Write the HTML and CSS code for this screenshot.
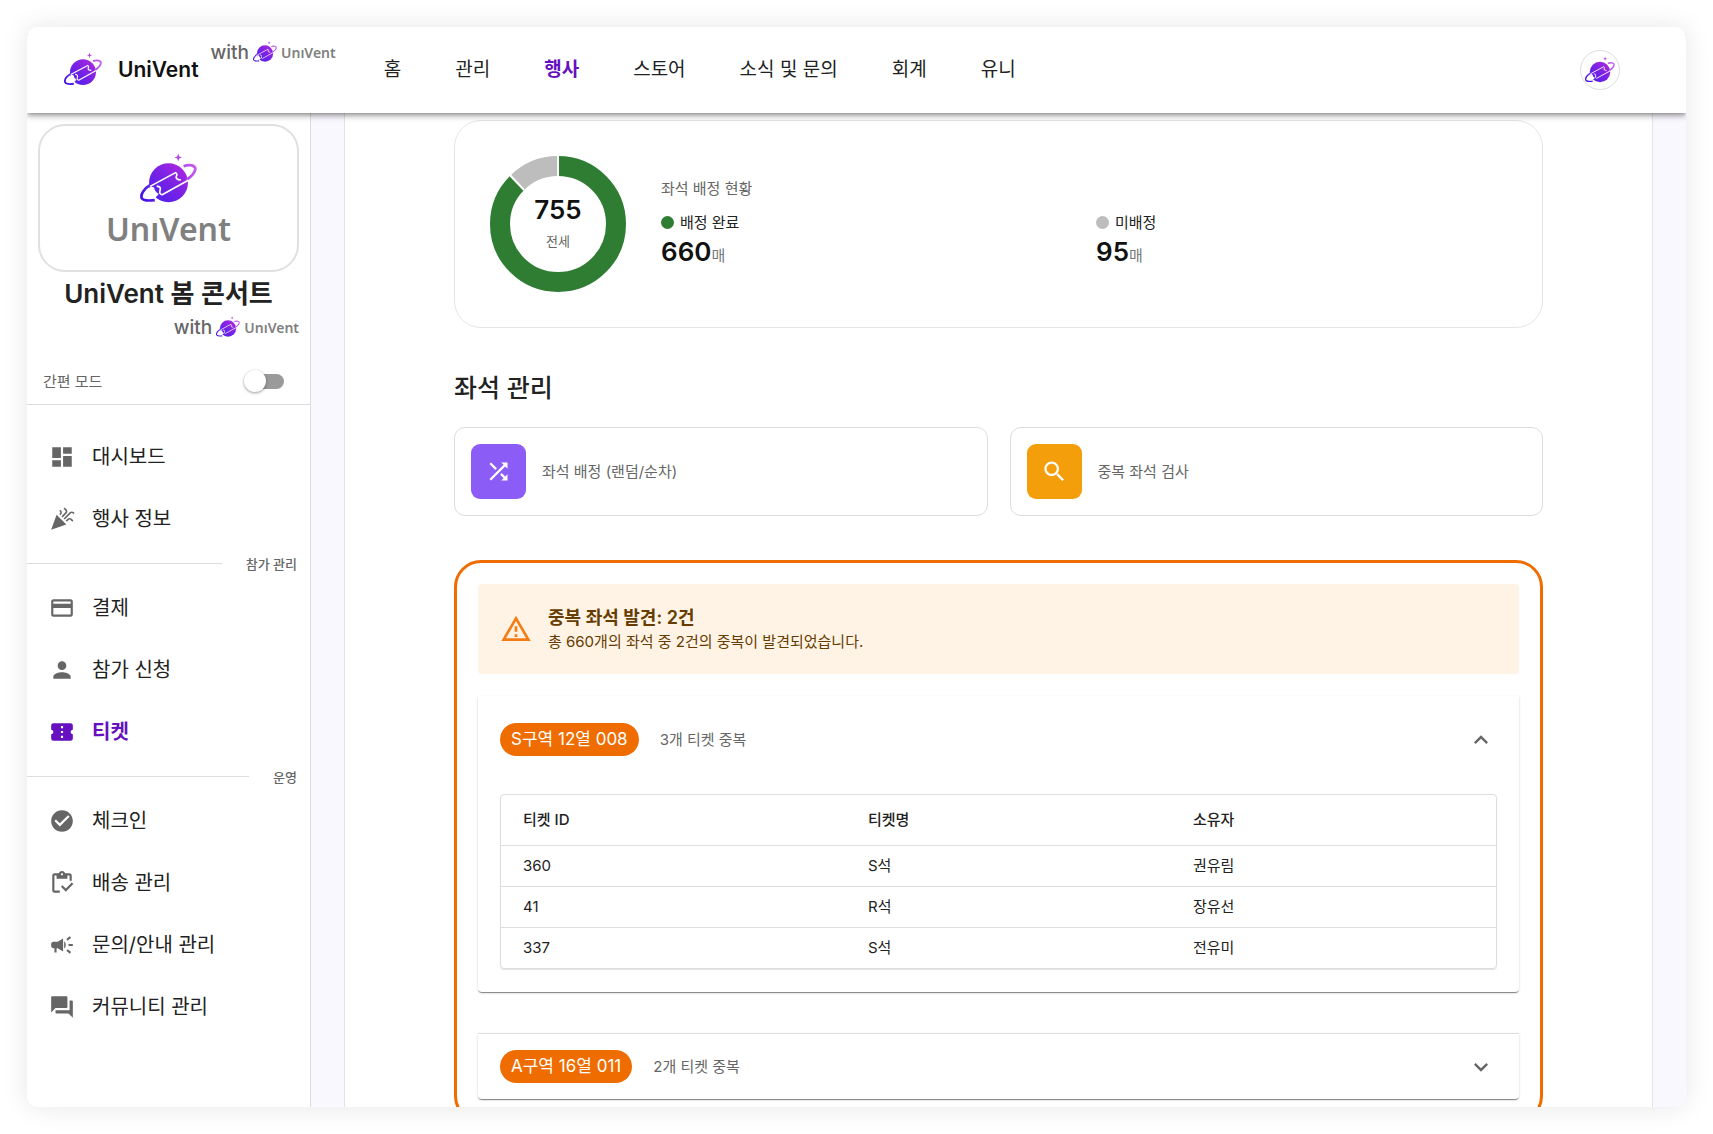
FILE: index.html
```
<!DOCTYPE html>
<html lang="ko">
<head>
  <meta charset="UTF-8">
  <meta name="viewport" content="width=device-width, initial-scale=1.0">
  <title>UniVent 봄 콘서트 - 티켓</title>
  <link rel="stylesheet" href="styles.css">
</head>
<body>

  <!-- shared logo -->
  <svg class="defs" width="0" height="0" aria-hidden="true">
    <defs>
      <linearGradient id="planetFill" gradientUnits="userSpaceOnUse" x1="60" y1="170" x2="170" y2="50">
        <stop offset="0" stop-color="#4a1ff0"></stop>
        <stop offset="0.5" stop-color="#7a22e4"></stop>
        <stop offset="1" stop-color="#b92ae0"></stop>
      </linearGradient>
      <linearGradient id="ringFill" gradientUnits="userSpaceOnUse" x1="40" y1="160" x2="195" y2="60">
        <stop offset="0" stop-color="#4512e8"></stop>
        <stop offset="1" stop-color="#c95cf0"></stop>
      </linearGradient>
      <symbol id="planet" viewBox="30 25 170 150">
        <circle cx="115" cy="114" r="58" fill="url(#planetFill)"></circle>
        <path d="M60 124L60 146Q62 154 76 158L86 148Q74 140 72 128Z" fill="#fff"></path>
        <path d="M62 120C42 132 31 148 35 160Q40 170 74 166" fill="none" stroke="url(#ringFill)" stroke-width="8"></path>
        <path d="M160 65C178 58 196 62 195 74C193 88 180 98 168 106" fill="none" stroke="url(#ringFill)" stroke-width="8"></path>
        <path d="M60 125L136 84Q143 88 138 96Q136 105 152 106M80 124Q94 126 90 136Q86 148 96 150L174 107" fill="none" stroke="#fff" stroke-width="5" stroke-linejoin="round"></path>
        <path d="M144 27L147 36L155 39L147 42L144 51L141 42L133 39L141 36Z" fill="#b345e6"></path>
      </symbol>
    </defs>
  </svg>

  <div class="app">
    <header class="topbar">
      <a class="brand" href="#">
        <svg class="brand-logo"><use href="#planet"></use></svg>
        <span class="brand-name">UniVent</span>
      </a>
      <div class="with with-top">
        <span>with</span>
        <svg class="with-logo"><use href="#planet"></use></svg>
        <span class="wordmark">UnıVent</span>
      </div>
      <nav class="topnav">
        <a href="#">홈</a>
        <a href="#">관리</a>
        <a href="#" class="active">행사</a>
        <a href="#">스토어</a>
        <a href="#">소식 및 문의</a>
        <a href="#">회계</a>
        <a href="#">유니</a>
      </nav>
      <button class="avatar" type="button" aria-label="프로필">
        <svg><use href="#planet"></use></svg>
      </button>
    </header>

    <div class="layout">
      <aside class="sidebar">
        <div class="event-logo">
          <svg><use href="#planet"></use></svg>
          <span class="wordmark">UnıVent</span>
        </div>
        <h1 class="event-title">UniVent 봄 콘서트</h1>
        <div class="with">
          <span>with</span>
          <svg class="with-logo"><use href="#planet"></use></svg>
          <span class="wordmark">UnıVent</span>
        </div>

        <div class="simple-mode">
          <label for="simpleMode">간편 모드</label>
          <input type="checkbox" id="simpleMode" class="switch">
        </div>

        <nav class="menu">
          <a href="#">
            <svg viewBox="0 0 24 24"><path d="M3 13h8V3H3v10zm0 8h8v-6H3v6zm10 0h8V11h-8v10zm0-18v6h8V3h-8z"/></svg>
            대시보드
          </a>
          <a href="#">
            <svg viewBox="0 0 24 24"><path d="M2 22l14-5-9-9zM14.53 12.53l5.59-5.59c.49-.49 1.28-.49 1.77 0l.59.59 1.06-1.06-.59-.59c-1.07-1.07-2.82-1.07-3.89 0l-5.59 5.59 1.06 1.06zM10.06 6.88l-.59.59 1.06 1.06.59-.59c1.07-1.07 1.07-2.82 0-3.89l-.59-.59-1.06 1.07.59.59c.48.48.48 1.28 0 1.76zM17.06 11.88l-1.59 1.59 1.06 1.06 1.59-1.59c.49-.49 1.28-.49 1.77 0l1.61 1.61 1.06-1.06-1.61-1.61c-1.08-1.07-2.82-1.07-3.89 0zM15.06 5.88l-3.59 3.59 1.06 1.06 3.59-3.59c1.07-1.07 1.07-2.82 0-3.89l-1.59-1.59-1.06 1.06 1.59 1.59c.48.49.48 1.29 0 1.77z"/></svg>
            행사 정보
          </a>
          <div class="menu-divider">참가 관리</div>
          <a href="#">
            <svg viewBox="0 0 24 24"><path d="M20 4H4c-1.11 0-1.99.89-1.99 2L2 18c0 1.11.89 2 2 2h16c1.11 0 2-.89 2-2V6c0-1.11-.89-2-2-2zm0 14H4v-6h16v6zm0-10H4V6h16v2z"/></svg>
            결제
          </a>
          <a href="#">
            <svg viewBox="0 0 24 24"><path d="M12 12c2.210 0 4-1.790 4-4s-1.790-4-4-4-4 1.790-4 4 1.790 4 4 4zm0 2c-2.670 0-8 1.340-8 4v2h16v-2c0-2.660-5.330-4-8-4z"/></svg>
            참가 신청
          </a>
          <a href="#" class="active">
            <svg viewBox="0 0 24 24"><path d="M22 10V6c0-1.110-.9-2-2-2H4c-1.100 0-1.990.89-1.990 2v4c1.100 0 1.990.9 1.990 2s-.89 2-2 2v4c0 1.100.9 2 2 2h16c1.100 0 2-.9 2-2v-4c-1.100 0-2-.9-2-2s.9-2 2-2zm-9 7.500h-2v-2h2v2zm0-4.500h-2v-2h2v2zm0-4.500h-2v-2h2v2z"/></svg>
            티켓
          </a>
          <div class="menu-divider">운영</div>
          <a href="#">
            <svg viewBox="0 0 24 24"><path d="M12 2C6.480 2 2 6.480 2 12s4.480 10 10 10 10-4.480 10-10S17.520 2 12 2zm-2 15l-5-5 1.410-1.410L10 14.170l7.590-7.590L19 8l-9 9z"/></svg>
            체크인
          </a>
          <a href="#">
            <svg viewBox="0 0 24 24"><path d="M5 5h2v3h10V5h2v5h2V5c0-1.100-.9-2-2-2h-4.180C14.400 1.840 13.300 1 12 1s-2.400.84-2.820 2H5c-1.100 0-2 .9-2 2v14c0 1.100.9 2 2 2h5v-2H5V5zm7-2c.55 0 1 .45 1 1s-.45 1-1 1-1-.45-1-1 .45-1 1-1zM21 11.500L15.510 17l-3.010-3L11 15.500l4.510 4.500L22.500 13z"/></svg>
            배송 관리
          </a>
          <a href="#">
            <svg viewBox="0 0 24 24"><path d="M18 11v2h4v-2h-4zm-2 6.610c.96.71 2.210 1.650 3.200 2.390.4-.53.8-1.070 1.200-1.600-.99-.74-2.240-1.680-3.200-2.400-.4.54-.8 1.080-1.200 1.610zM20.400 5.600c-.4-.53-.8-1.070-1.200-1.600-.99.74-2.240 1.680-3.200 2.400.4.530.8 1.070 1.200 1.600.96-.72 2.210-1.650 3.200-2.400zM4 9c-1.100 0-2 .9-2 2v2c0 1.100.9 2 2 2h1v4h2v-4h1l5 3V6L8 9H4zm11.500 3c0-1.330-.58-2.530-1.500-3.350v6.690c.92-.81 1.500-2.010 1.500-3.340z"/></svg>
            문의/안내 관리
          </a>
          <a href="#">
            <svg viewBox="0 0 24 24"><path d="M21 6h-2v9H6v2c0 .55.45 1 1 1h11l4 4V7c0-.55-.45-1-1-1zm-4 6V3c0-.55-.45-1-1-1H3c-.55 0-1 .45-1 1v14l4-4h10c.55 0 1-.45 1-1z"/></svg>
            커뮤니티 관리
          </a>
        </nav>
      </aside>

      <main class="page">
        <div class="panel">

          <section class="summary">
            <div class="donut">
              <svg viewBox="0 0 136 136">
                <circle class="donut-done" cx="68" cy="68" r="58" pathLength="755" stroke-dasharray="660 95"></circle>
                <circle class="donut-left" cx="68" cy="68" r="58" pathLength="755" stroke-dasharray="95 660" stroke-dashoffset="-660"></circle>
                <path class="donut-gap" d="M68 20V0M34 34L19 18"></path>
              </svg>
              <div class="donut-label">
                <strong>755</strong>
                <span>전세</span>
              </div>
            </div>
            <div class="summary-body">
              <h3>좌석 배정 현황</h3>
              <div class="stats">
                <div class="stat">
                  <div class="stat-name"><i class="dot dot-done"></i>배정 완료</div>
                  <div class="stat-value"><strong>660</strong>매</div>
                </div>
                <div class="stat">
                  <div class="stat-name"><i class="dot"></i>미배정</div>
                  <div class="stat-value"><strong>95</strong>매</div>
                </div>
              </div>
            </div>
          </section>

          <h2 class="section-title">좌석 관리</h2>
          <div class="actions">
            <button type="button" class="action">
              <span class="action-icon purple">
                <svg viewBox="0 0 24 24"><path d="M10.590 9.170L5.410 4 4 5.410l5.170 5.170 1.420-1.410zM14.500 4l2.040 2.040L4 18.590 5.410 20 17.960 7.460 20 9.500V4h-5.500zm.33 9.410l-1.410 1.410 3.130 3.130L14.500 20H20v-5.500l-2.040 2.040-3.130-3.130z"/></svg>
              </span>
              좌석 배정 (랜덤/순차)
            </button>
            <button type="button" class="action">
              <span class="action-icon amber">
                <svg viewBox="0 0 24 24"><path d="M15.500 14h-.79l-.28-.27C15.410 12.590 16 11.110 16 9.500 16 5.910 13.090 3 9.500 3S3 5.910 3 9.500 5.910 16 9.500 16c1.610 0 3.090-.59 4.230-1.570l.27.28v.79l5 4.990L20.490 19l-4.990-5zm-6 0C7.010 14 5 11.990 5 9.500S7.010 5 9.500 5 14 7.010 14 9.500 11.990 14 9.500 14z"/></svg>
              </span>
              중복 좌석 검사
            </button>
          </div>

          <section class="duplicates">
            <div class="alert">
              <svg viewBox="0 0 24 24"><path d="M12 5.990L19.530 19H4.470L12 5.990M12 2L1 21h22L12 2zm1 14h-2v2h2v-2zm0-6h-2v4h2v-4z"/></svg>
              <div>
                <h3>중복 좌석 발견: 2건</h3>
                <p>총 660개의 좌석 중 2건의 중복이 발견되었습니다.</p>
              </div>
            </div>

            <div class="accordion open">
              <button type="button" class="accordion-head" aria-expanded="true">
                <span class="chip">S구역 12열 008</span>
                <span class="count">3개 티켓 중복</span>
                <svg viewBox="0 0 24 24"><path d="M12 8l-6 6 1.410 1.410L12 10.830l4.590 4.580L18 14z"/></svg>
              </button>
              <div class="table-wrap">
                <table>
                  <thead>
                    <tr>
                      <th class="col-id">티켓 ID</th>
                      <th class="col-name">티켓명</th>
                      <th>소유자</th>
                    </tr>
                  </thead>
                  <tbody>
                    <tr><td>360</td><td>S석</td><td>권유림</td></tr>
                    <tr><td>41</td><td>R석</td><td>장유선</td></tr>
                    <tr><td>337</td><td>S석</td><td>전유미</td></tr>
                  </tbody>
                </table>
              </div>
            </div>

            <div class="accordion">
              <button type="button" class="accordion-head" aria-expanded="false">
                <span class="chip">A구역 16열 011</span>
                <span class="count">2개 티켓 중복</span>
                <svg viewBox="0 0 24 24"><path d="M16.590 8.590L12 13.170 7.410 8.590 6 10l6 6 6-6z"/></svg>
              </button>
            </div>
          </section>

        </div>
      </main>
    </div>
  </div>

</body>
</html>
```
FILE: styles.css
```
* {
  box-sizing: border-box;
}

body {
  margin: 0;
  height: 100vh;
  padding: 27px;
  background: #fff;
  color: #222;
  font-family: Inter, "Noto Sans CJK KR", sans-serif;
  font-size: 15px;
  line-height: 22px;
  overflow: hidden;
}

h1, h2, h3, p {
  margin: 0;
}

a {
  color: inherit;
  text-decoration: none;
}

button {
  font: inherit;
  color: inherit;
  text-align: left;
  cursor: pointer;
}

.defs {
  position: absolute;
}

.app {
  display: flex;
  flex-direction: column;
  height: 100%;
  border-radius: 11px;
  background: #fff;
  box-shadow: 0 0 27px rgba(0,0,0,0.1);
  overflow: hidden;
}

/* top bar */
.topbar {
  position: relative;
  z-index: 2;
  display: flex;
  align-items: center;
  flex: none;
  height: 86px;
  padding: 0 66px 0 37px;
  background: #fff;
  box-shadow: 0 2px 4px -1px rgba(0,0,0,0.3), 0 4px 5px rgba(0,0,0,0.16), 0 1px 10px rgba(0,0,0,0.12);
}

.brand {
  display: flex;
  align-items: center;
  gap: 16px;
}

.brand-logo {
  width: 38px;
  height: 36px;
  padding-bottom: 2px;
}

.brand-name {
  font-size: 21px;
  font-weight: 600;
  color: #111;
}

.with {
  display: flex;
  align-items: center;
  justify-content: flex-end;
  gap: 4px;
  font-size: 19px;
  font-weight: 500;
  color: #666;
}

.with-top {
  align-self: flex-start;
  margin: 13px 0 0 12px;
}

.with-logo {
  width: 24px;
  height: 26px;
  padding-bottom: 3px;
}

.wordmark {
  font-family: "Noto Sans", sans-serif;
  font-size: 14px;
  font-weight: 600;
  color: #808080;
}

.with .wordmark {
  line-height: 20px;
}

.topnav {
  display: flex;
  gap: 54px;
  margin-left: 48px;
  font-size: 19px;
}

.topnav .active {
  color: #6610c0;
  font-weight: 700;
}

.avatar {
  display: flex;
  align-items: center;
  justify-content: center;
  width: 40px;
  height: 40px;
  margin-left: auto;
  padding: 0;
  border: 1px solid #ddd;
  border-radius: 50%;
  background: #fff;
}

.avatar svg {
  width: 30px;
  height: 28px;
  padding-bottom: 1px;
}

/* sidebar */
.layout {
  display: flex;
  flex: 1;
  min-height: 0;
}

.sidebar {
  flex: none;
  width: 284px;
  padding-top: 11px;
  border-right: 1px solid #ddd;
  background: #fff;
}

.sidebar .with {
  margin: 3px 11px 0;
}

.event-logo {
  display: flex;
  flex-direction: column;
  align-items: center;
  height: 148px;
  margin: 0 11px;
  padding-top: 26px;
  border: 2px solid #e0e0e0;
  border-radius: 27px;
}

.event-logo svg {
  width: 57px;
  height: 52px;
}

.event-logo .wordmark {
  font-size: 32px;
  line-height: 50px;
}

.event-title {
  margin-top: 4px;
  font-size: 26px;
  font-weight: 600;
  line-height: 36px;
  text-align: center;
}

.simple-mode {
  display: flex;
  align-items: center;
  justify-content: space-between;
  height: 44px;
  margin-top: 20px;
  padding: 0 26px 2px 16px;
  border-bottom: 1px solid #ddd;
  color: #666;
}

.switch {
  appearance: none;
  position: relative;
  width: 37px;
  height: 15px;
  margin: 0;
  border-radius: 8px;
  background: #9a9a9a;
}

.switch::before {
  content: "";
  position: absolute;
  top: -4px;
  left: -3px;
  width: 22px;
  height: 22px;
  border-radius: 50%;
  background: #fff;
  box-shadow: 0 1px 3px rgba(0,0,0,0.4);
}

.menu {
  padding-top: 21px;
}

.menu a {
  display: flex;
  align-items: center;
  gap: 17px;
  height: 62px;
  padding: 0 22px;
  font-size: 20px;
}

.menu svg {
  width: 26px;
  height: 26px;
  fill: #666;
}

.menu .active {
  color: #6610c0;
  font-weight: 700;
}

.menu .active svg {
  fill: #6610c0;
}

.menu-divider {
  display: flex;
  align-items: center;
  gap: 24px;
  height: 27px;
  padding-right: 13px;
  font-size: 13px;
  font-weight: 500;
  color: #666;
}

.menu-divider::before {
  content: "";
  flex: 1;
  height: 1px;
  background: #ddd;
}

/* page */
.page {
  flex: 1;
  min-width: 0;
  padding: 0 33px;
  background: #faf8ff;
  overflow: hidden;
}

.panel {
  min-height: 100%;
  padding: 7px 109px;
  border: solid #e3e3e3;
  border-width: 0 1px;
  background: #fff;
}

.summary {
  display: flex;
  align-items: center;
  gap: 35px;
  height: 208px;
  padding: 0 35px;
  border: 1px solid #e5e5e5;
  border-radius: 27px;
}

.donut {
  display: grid;
  flex: none;
  width: 136px;
  height: 136px;
}

.donut svg,
.donut-label {
  grid-area: 1 / 1;
}

.donut circle {
  fill: none;
  stroke-width: 20;
  transform: rotate(-90deg);
  transform-origin: center;
}

.donut .donut-done {
  stroke: #2e7d32;
}

.donut .donut-left {
  stroke: #bdbdbd;
}

.donut-gap {
  stroke: #fff;
  stroke-width: 2;
}

.donut-label {
  display: flex;
  flex-direction: column;
  align-items: center;
  justify-content: center;
  gap: 9px;
  padding-top: 2px;
  font-size: 13px;
  color: #666;
}

.donut-label strong,
.stat-value strong {
  font-size: 26px;
  font-weight: 600;
  color: #111;
}

.summary-body {
  flex: 1;
  padding-top: 3px;
}

.summary-body h3 {
  font-size: 15px;
  font-weight: 400;
  color: #666;
}

.stats {
  display: grid;
  grid-template-columns: 1fr 1fr;
  gap: 24px;
  margin-top: 12px;
}

.stat-name {
  display: flex;
  align-items: center;
  gap: 6px;
}

.stat-value {
  line-height: 36px;
  color: #777;
}

.dot {
  width: 13px;
  height: 13px;
  border-radius: 50%;
  background: #bdbdbd;
}

.dot-done {
  background: #2e7d32;
}

.section-title {
  margin: 41px 0 20px;
  font-size: 25px;
  font-weight: 500;
  line-height: 38px;
}

.actions {
  display: grid;
  grid-template-columns: 1fr 1fr;
  gap: 22px;
}

.action {
  display: flex;
  align-items: center;
  gap: 16px;
  height: 89px;
  padding: 0 16px;
  border: 1px solid #ddd;
  border-radius: 11px;
  background: #fff;
  color: #666;
}

.action-icon {
  display: flex;
  align-items: center;
  justify-content: center;
  width: 55px;
  height: 55px;
  border-radius: 9px;
}

.action-icon svg {
  width: 27px;
  height: 27px;
  fill: #fff;
}

.purple {
  background: #8b5cf6;
}

.amber {
  background: #f59e0b;
}

/* duplicate seats */
.duplicates {
  margin-top: 44px;
  padding: 21px;
  border: 3px solid #ef6c00;
  border-radius: 27px;
}

.alert {
  display: flex;
  align-items: center;
  gap: 16px;
  height: 90px;
  padding: 0 22px;
  border-radius: 4px;
  background: #fff3e5;
  color: #663c00;
}

.alert svg {
  width: 32px;
  height: 32px;
  fill: #f57c13;
}

.alert h3 {
  font-size: 18px;
  font-weight: 600;
  line-height: 26px;
}

.accordion {
  margin-top: 41px;
  border-top: 1px solid #ddd;
  border-radius: 0 0 4px 4px;
  background: #fff;
  box-shadow: 0 2px 1px -1px rgba(0,0,0,0.3), 0 1px 1px rgba(0,0,0,0.2), 0 1px 3px rgba(0,0,0,0.12);
}

.accordion.open {
  margin-top: 22px;
  border-top: 0;
}

.accordion-head {
  display: flex;
  align-items: center;
  gap: 21px;
  width: 100%;
  padding: 16px 22px;
  border: 0;
  background: none;
}

.open .accordion-head {
  padding: 27px 22px;
}

.accordion-head svg {
  width: 28px;
  height: 28px;
  margin: 0 2px 0 auto;
  fill: #666;
}

.chip {
  padding: 0 11px;
  border-radius: 17px;
  background: #ef6c00;
  color: #fff;
  font-size: 17px;
  line-height: 33px;
}

.count {
  color: #666;
}

.table-wrap {
  padding: 11px 22px 23px;
}

table {
  width: 100%;
  table-layout: fixed;
  border: 1px solid #ddd;
  border-radius: 4px;
  border-spacing: 0;
  box-shadow: 0 1px 1px rgba(0,0,0,0.12);
}

th, td {
  height: 41px;
  padding: 0 22px 1px;
  text-align: left;
}

th {
  height: 50px;
  font-weight: 500;
}

td {
  border-top: 1px solid #ddd;
}

.col-id {
  width: 345px;
}

.col-name {
  width: 325px;
}
```
